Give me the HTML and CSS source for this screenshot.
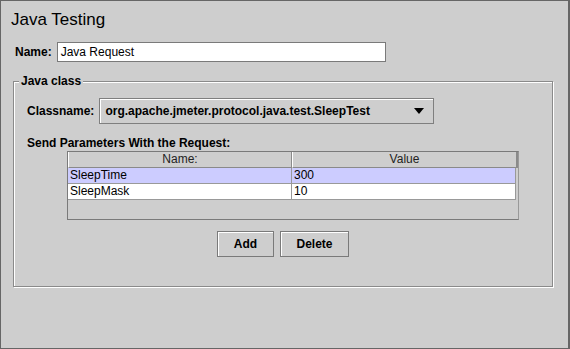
FILE: index.html
```html
<!DOCTYPE html>
<html lang="en">
<head>
  <meta charset="UTF-8">
  <title>Java Testing</title>
  <link rel="stylesheet" href="styles.css">
</head>
<body>
  <div class="panel">
    <!-- Title -->
    <h1 class="title">Java Testing</h1>
    <!-- Name -->
    <div class="name-row">
      <span class="label">Name:</span>
      <div class="text-field">Java Request</div>
    </div>
    <!-- Java class -->
    <fieldset class="group">
      <legend>Java class</legend>
      <div class="class-row">
        <span class="label">Classname:</span>
        <div class="combo">
          <span>org.apache.jmeter.protocol.java.test.SleepTest</span>
          <span class="arrow"></span>
        </div>
      </div>
      <div class="params-label">Send Parameters With the Request:</div>
      <div class="table-pane">
        <div class="table-head">
          <div class="th">Name:</div>
          <div class="th th-last">Value</div>
        </div>
        <div class="row selected">
          <div class="td">SleepTime</div>
          <div class="td">300</div>
        </div>
        <div class="row">
          <div class="td">SleepMask</div>
          <div class="td">10</div>
        </div>
      </div>
      <div class="buttons">
        <button class="button add">Add</button>
        <button class="button delete">Delete</button>
      </div>
    </fieldset>
  </div>
</body>
</html>
```

FILE: styles.css
```css
body {
  margin: 0;
  font-family: "Liberation Sans", Arial, sans-serif;
  font-size: 12px;
  color: #000;
}
.panel {
  box-sizing: border-box;
  width: 570px;
  height: 349px;
  padding: 9px 0 0 0;
  background-color: #cecece;
  border: 1px solid #666;
  border-right-width: 2px;
}
.title {
  margin: 0 0 0 10px;
  font-size: 17px;
  font-weight: normal;
  line-height: 20px;
}
.label {
  font-weight: bold;
  line-height: 14px;
}
/* Name */
.name-row {
  display: flex;
  align-items: center;
  gap: 5px;
  margin: 12px 0 0 14px;
}
.text-field {
  box-sizing: border-box;
  width: 329px;
  height: 20px;
  padding: 0 3px;
  line-height: 18px;
  background-color: #fff;
  border: 1px solid #7a7a7a;
}
/* Java class */
.group {
  box-sizing: border-box;
  width: 540px;
  margin: 12px 0 0 12px;
  padding: 10px 13px 29px 13px;
  border: 1px solid #8a8a8a;
  box-shadow: inset 1px 1px 0 #fff, 1px 1px 0 #fff;
}
.group legend {
  margin-left: -8px;
  padding: 0 2px;
  font-weight: bold;
  line-height: 14px;
  background-color: #cecece;
}
.class-row {
  display: flex;
  align-items: center;
  gap: 5px;
}
.combo {
  box-sizing: border-box;
  display: flex;
  align-items: center;
  justify-content: space-between;
  width: 335px;
  height: 26px;
  padding: 0 5px 0 5px;
  font-weight: bold;
  border: 1px solid #7f7f7f;
  box-shadow: inset 1px 1px 0 #fff;
}
.arrow {
  width: 0;
  height: 0;
  margin-right: 4px;
  border-left: 5px solid transparent;
  border-right: 5px solid transparent;
  border-top: 6px solid #000;
}
.params-label {
  margin-top: 12px;
  font-weight: bold;
  line-height: 14px;
}
/* Table */
.table-pane {
  box-sizing: border-box;
  width: 452px;
  height: 69px;
  margin: 1px 0 0 40px;
  border: 1px solid #7a7a7a;
  border-right-color: #999;
}
.table-head,
.row {
  display: flex;
}
.th {
  box-sizing: border-box;
  width: 224px;
  height: 16px;
  line-height: 14px;
  text-align: center;
  color: #222;
  border-left: 1px solid #fff;
  border-right: 1px solid #8a8a8a;
  border-bottom: 1px solid #8a8a8a;
}
.th-last {
  width: 226px;
  border-right: 2px solid #8a8a8a;
}
.row {
  width: 448px;
  background-color: #fff;
}
.row.selected {
  background-color: #ccccff;
}
.td {
  box-sizing: border-box;
  width: 224px;
  height: 16px;
  padding-left: 2px;
  line-height: 15px;
  border-right: 1px solid #999;
  border-bottom: 1px solid #999;
}
/* Buttons */
.buttons {
  display: flex;
  justify-content: center;
  gap: 6px;
  margin-top: 11px;
}
.button {
  box-sizing: border-box;
  height: 26px;
  padding: 0;
  font-family: inherit;
  font-size: 12px;
  font-weight: bold;
  color: #000;
  background-color: #cecece;
  border: 1px solid #7a7a7a;
  box-shadow: inset 1px 1px 0 #fff;
}
.add {
  width: 57px;
}
.delete {
  width: 69px;
}
```
